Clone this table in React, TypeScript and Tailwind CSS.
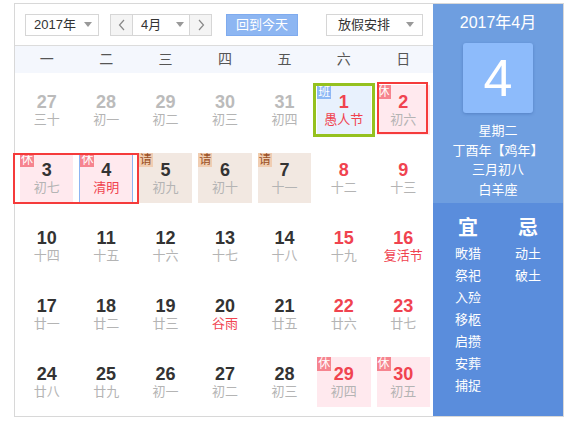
import React from "react";

type Day = {
  n: number;
  l: string;
  out?: boolean;
  red?: boolean;
  lred?: boolean;
  tag?: "休" | "请" | "班";
  today?: boolean;
};

const weeks: Day[][] = [
  [
    { n: 27, l: "三十", out: true },
    { n: 28, l: "初一", out: true },
    { n: 29, l: "初二", out: true },
    { n: 30, l: "初三", out: true },
    { n: 31, l: "初四", out: true },
    { n: 1, l: "愚人节", red: true, lred: true, tag: "班" },
    { n: 2, l: "初六", red: true, tag: "休" },
  ],
  [
    { n: 3, l: "初七", tag: "休" },
    { n: 4, l: "清明", lred: true, tag: "休", today: true },
    { n: 5, l: "初九", tag: "请" },
    { n: 6, l: "初十", tag: "请" },
    { n: 7, l: "十一", tag: "请" },
    { n: 8, l: "十二", red: true },
    { n: 9, l: "十三", red: true },
  ],
  [
    { n: 10, l: "十四" },
    { n: 11, l: "十五" },
    { n: 12, l: "十六" },
    { n: 13, l: "十七" },
    { n: 14, l: "十八" },
    { n: 15, l: "十九", red: true },
    { n: 16, l: "复活节", red: true, lred: true },
  ],
  [
    { n: 17, l: "廿一" },
    { n: 18, l: "廿二" },
    { n: 19, l: "廿三" },
    { n: 20, l: "谷雨", lred: true },
    { n: 21, l: "廿五" },
    { n: 22, l: "廿六", red: true },
    { n: 23, l: "廿七", red: true },
  ],
  [
    { n: 24, l: "廿八" },
    { n: 25, l: "廿九" },
    { n: 26, l: "初一" },
    { n: 27, l: "初二" },
    { n: 28, l: "初三" },
    { n: 29, l: "初四", red: true, tag: "休" },
    { n: 30, l: "初五", red: true, tag: "休" },
  ],
];

const yi = ["畋猎", "祭祀", "入殓", "移柩", "启攒", "安葬", "捕捉"];
const ji = ["动土", "破土"];

function Caret() {
  return <span className="w-0 h-0 border-x-[4px] border-x-transparent border-t-[5px] border-t-[#999]" />;
}

function Cell({ d }: { d: Day }) {
  let bg = "";
  if (d.tag === "休") bg = "bg-[#ffe9ee]";
  if (d.tag === "请") bg = "bg-[#f2e8e1]";
  if (d.tag === "班") bg = "bg-[#e8f1fd]";

  const numColor = d.out ? "text-[#bbbbbb]" : d.red ? "text-[#f0434f]" : "text-[#333333]";
  const lunarColor = d.lred ? "text-[#f0434f]" : "text-[#b4b4b4]";

  return (
    <div className="h-[68px] px-[3px] py-[9px]">
      <div
        className={`relative h-full flex flex-col items-center justify-center ${bg} ${
          d.today ? "border-x border-[#8db5f2]" : ""
        }`}
      >
        {d.tag && (
          <span
            className={`absolute top-0 left-0 w-[14px] h-[14px] text-[12px] leading-[14px] text-center ${
              d.tag === "休"
                ? "bg-[#f6848f] text-white"
                : d.tag === "请"
                ? "bg-[#f0cdb2] text-[#9a4f24]"
                : "bg-[#8db8f5] text-white"
            }`}
          >
            {d.tag}
          </span>
        )}
        <span className={`text-[18px] leading-[20px] font-bold ${numColor}`}>{d.n}</span>
        <span className={`text-[13px] leading-[16px] ${lunarColor}`}>{d.l}</span>
        {d.n === 1 && !d.out && (
          <span className="absolute -left-[4px] -right-[4px] -top-[2px] -bottom-[2px] border-[3px] border-[#95c11f]" />
        )}
        {d.n === 2 && !d.out && (
          <span className="absolute left-0 right-[2px] -top-[3px] bottom-[1px] border-2 border-[#f53b3b]" />
        )}
      </div>
    </div>
  );
}

export default function App() {
  return (
    <div
      className="bg-white w-[577px] h-[428px] pt-[3px] pl-[14px]"
      style={{ fontFamily: '"Liberation Sans", "Noto Sans CJK SC", sans-serif' }}
    >
      <div className="w-[550px] border border-[#d8d8d8] flex">
        {/* left: calendar */}
        <div className="w-[418px] flex flex-col">
          <div className="h-[42px] border-b border-[#dcdcdc] flex items-center pl-[10px] text-[13px] text-[#333]">
            <div className="w-[74px] h-[22px] border border-[#d6d6d6] flex items-center justify-between pl-[8px] pr-[6px]">
              <span>2017年</span>
              <Caret />
            </div>
            <div className="ml-[11px] w-[102px] h-[22px] border border-[#d6d6d6] flex">
              <div className="w-[22px] bg-[#f4f4f4] border-r border-[#d6d6d6] flex items-center justify-center">
                <svg width="8" height="12" viewBox="0 0 8 12">
                  <path d="M6 1L1.5 6L6 11" fill="none" stroke="#888" strokeWidth="1.2" />
                </svg>
              </div>
              <div className="flex-1 flex items-center justify-between pl-[8px] pr-[5px]">
                <span>4月</span>
                <Caret />
              </div>
              <div className="w-[22px] bg-[#f4f4f4] border-l border-[#d6d6d6] flex items-center justify-center">
                <svg width="8" height="12" viewBox="0 0 8 12">
                  <path d="M2 1L6.5 6L2 11" fill="none" stroke="#888" strokeWidth="1.2" />
                </svg>
              </div>
            </div>
            <div className="ml-[14px] w-[72px] h-[22px] bg-[#8db6f2] border border-[#7fabee] text-white flex items-center justify-center text-[13px]">
              回到今天
            </div>
            <div className="ml-[28px] w-[97px] h-[22px] border border-[#d6d6d6] flex items-center justify-between pl-[11px] pr-[8px]">
              <span>放假安排</span>
              <Caret />
            </div>
          </div>
          <div className="h-[27px] bg-[#f4f7fd] pl-[2px] grid grid-cols-7 items-center text-[14px] text-[#555]">
            {["一", "二", "三", "四", "五", "六", "日"].map((w) => (
              <div key={w} className="text-center">
                {w}
              </div>
            ))}
          </div>
          <div className="relative pl-[2px] pt-[3px]">
            {weeks.map((wk, i) => (
              <div key={i} className="grid grid-cols-7">
                {wk.map((d, j) => (
                  <Cell key={j} d={d} />
                ))}
              </div>
            ))}
            <span className="absolute -left-[2px] top-[80px] w-[126px] h-[51px] border-2 border-[#f53b3b]" />
          </div>
        </div>

        {/* right: detail */}
        <div className="w-[130px] flex flex-col text-white">
          <div className="h-[199px] bg-[#6e9ee0] flex flex-col items-center pt-[9px]">
            <div className="text-[16px] leading-[20px]">2017年4月</div>
            <div className="mt-[10px] w-[70px] h-[70px] rounded-[3px] bg-[#8dbbfb] shadow-[0_1px_3px_rgba(40,80,150,0.35)] flex items-center justify-center text-[52px] leading-none">
              4
            </div>
            <div className="mt-[8px] text-[13px] leading-[19.5px] text-center">
              <div>星期二</div>
              <div>丁酉年【鸡年】</div>
              <div>三月初八</div>
              <div>白羊座</div>
            </div>
          </div>
          <div className="flex-1 bg-[#5a8ddc] flex px-[5px] pt-[13px]">
            <div className="w-1/2 flex flex-col items-center">
              <div className="text-[20px] leading-[24px] font-bold">宜</div>
              <div className="mt-[3px] text-[13px] leading-[22px] text-center">
                {yi.map((t) => (
                  <div key={t}>{t}</div>
                ))}
              </div>
            </div>
            <div className="w-1/2 flex flex-col items-center">
              <div className="text-[20px] leading-[24px] font-bold">忌</div>
              <div className="mt-[3px] text-[13px] leading-[22px] text-center">
                {ji.map((t) => (
                  <div key={t}>{t}</div>
                ))}
              </div>
            </div>
          </div>
        </div>
      </div>
    </div>
  );
}
